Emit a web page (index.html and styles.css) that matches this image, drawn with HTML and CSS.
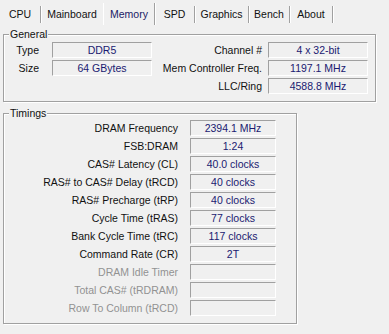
FILE: index.html
```html
<!DOCTYPE html>
<html>
<head>
<meta charset="utf-8">
<link rel="stylesheet" href="styles.css">
</head>
<body>
<div class="window">
  <div class="tabs">
    <div class="tab t-cpu">CPU</div>
    <div class="tab t-main">Mainboard</div>
    <div class="tab active t-mem">Memory</div>
    <div class="tab t-spd">SPD</div>
    <div class="tab t-gfx">Graphics</div>
    <div class="tab t-bench">Bench</div>
    <div class="tab t-about">About</div>
  </div>

  <fieldset class="group general">
    <legend>General</legend>
    <div class="general-grid">
      <span class="lbl lbl-left">Type</span>
      <span class="field">DDR5</span>
      <span class="lbl lbl-right">Channel #</span>
      <span class="field">4 x 32-bit</span>

      <span class="lbl lbl-left">Size</span>
      <span class="field">64 GBytes</span>
      <span class="lbl lbl-right">Mem Controller Freq.</span>
      <span class="field">1197.1 MHz</span>

      <span class="empty"></span>
      <span class="empty"></span>
      <span class="lbl lbl-right">LLC/Ring</span>
      <span class="field">4588.8 MHz</span>
    </div>
  </fieldset>

  <fieldset class="group timings">
    <legend>Timings</legend>
    <div class="timings-grid">
      <span class="lbl">DRAM Frequency</span><span class="field">2394.1 MHz</span>
      <span class="lbl">FSB:DRAM</span><span class="field">1:24</span>
      <span class="lbl">CAS# Latency (CL)</span><span class="field">40.0 clocks</span>
      <span class="lbl">RAS# to CAS# Delay (tRCD)</span><span class="field">40 clocks</span>
      <span class="lbl">RAS# Precharge (tRP)</span><span class="field">40 clocks</span>
      <span class="lbl">Cycle Time (tRAS)</span><span class="field">77 clocks</span>
      <span class="lbl">Bank Cycle Time (tRC)</span><span class="field">117 clocks</span>
      <span class="lbl">Command Rate (CR)</span><span class="field">2T</span>
      <span class="lbl disabled">DRAM Idle Timer</span><span class="field"></span>
      <span class="lbl disabled">Total CAS# (tRDRAM)</span><span class="field"></span>
      <span class="lbl disabled">Row To Column (tRCD)</span><span class="field"></span>
    </div>
  </fieldset>
</div>
</body>
</html>
```

FILE: styles.css
```css
html, body {
  margin: 0;
  padding: 0;
  background: #f0f0f0;
}

body {
  width: 389px;
  height: 334px;
  overflow: hidden;
  font-family: "Liberation Sans", Arial, sans-serif;
  font-size: 10.5px;
  color: #000;
}

.window {
  display: flex;
  flex-direction: column;
  align-items: flex-start;
}

/* Tabs */
.tabs {
  display: flex;
  align-items: flex-start;
  height: 25px;
}

.tab {
  box-sizing: border-box;
  height: 17px;
  margin-top: 6px;
  line-height: 17px;
  text-align: center;
  border-right: 1px solid #a0a0a0;
  box-shadow: 1px 0 0 #ffffff;
  white-space: nowrap;
  color: #111;
}

.t-cpu { width: 41px; }
.t-main { width: 62px; border-right: none; box-shadow: none; }
.t-mem { width: 52px; }
.t-spd { width: 40px; }
.t-gfx { width: 54px; }
.t-bench { width: 41px; }
.t-about { width: 43px; }

.tab.active {
  height: 22px;
  margin-top: 3px;
  padding-top: 3px;
  border-left: 1px solid #ffffff;
  color: #1a1a66;
}

/* Group boxes */
.group {
  box-sizing: border-box;
  margin: 0 0 0 3px;
  padding: 0;
  border: 1px solid #a0a0a0;
  box-shadow: inset 1px 1px 0 #ffffff, 1px 1px 0 #ffffff;
  min-width: 0;
}

.group legend {
  margin-left: 5px;
  padding: 0 1px;
  line-height: 14px;
  height: 14px;
  background: #f0f0f0;
  color: #111;
}

.general {
  width: 373px;
  margin-top: 2px;
  padding: 1px 7px 7px 0;
}

.timings {
  width: 294px;
  margin-top: 4px;
  padding: 0 20px 7px 0;
}

.general-grid {
  display: grid;
  grid-template-columns: 48px 100px 1fr 100px;
  row-gap: 2px;
}

.timings-grid {
  display: grid;
  grid-template-columns: 1fr 86px;
  column-gap: 12px;
  row-gap: 2px;
}

.lbl {
  height: 16px;
  line-height: 16px;
  text-align: right;
  white-space: nowrap;
  color: #111;
}

.lbl-left { padding-right: 13px; }
.lbl-right { padding-right: 6px; }

.lbl.disabled { color: #929292; }

.field {
  box-sizing: border-box;
  height: 16px;
  line-height: 14px;
  border: 1px solid;
  border-color: #a0a0a0 #ffffff #ffffff #a0a0a0;
  text-align: center;
  white-space: nowrap;
  color: #1a1a70;
}
```
